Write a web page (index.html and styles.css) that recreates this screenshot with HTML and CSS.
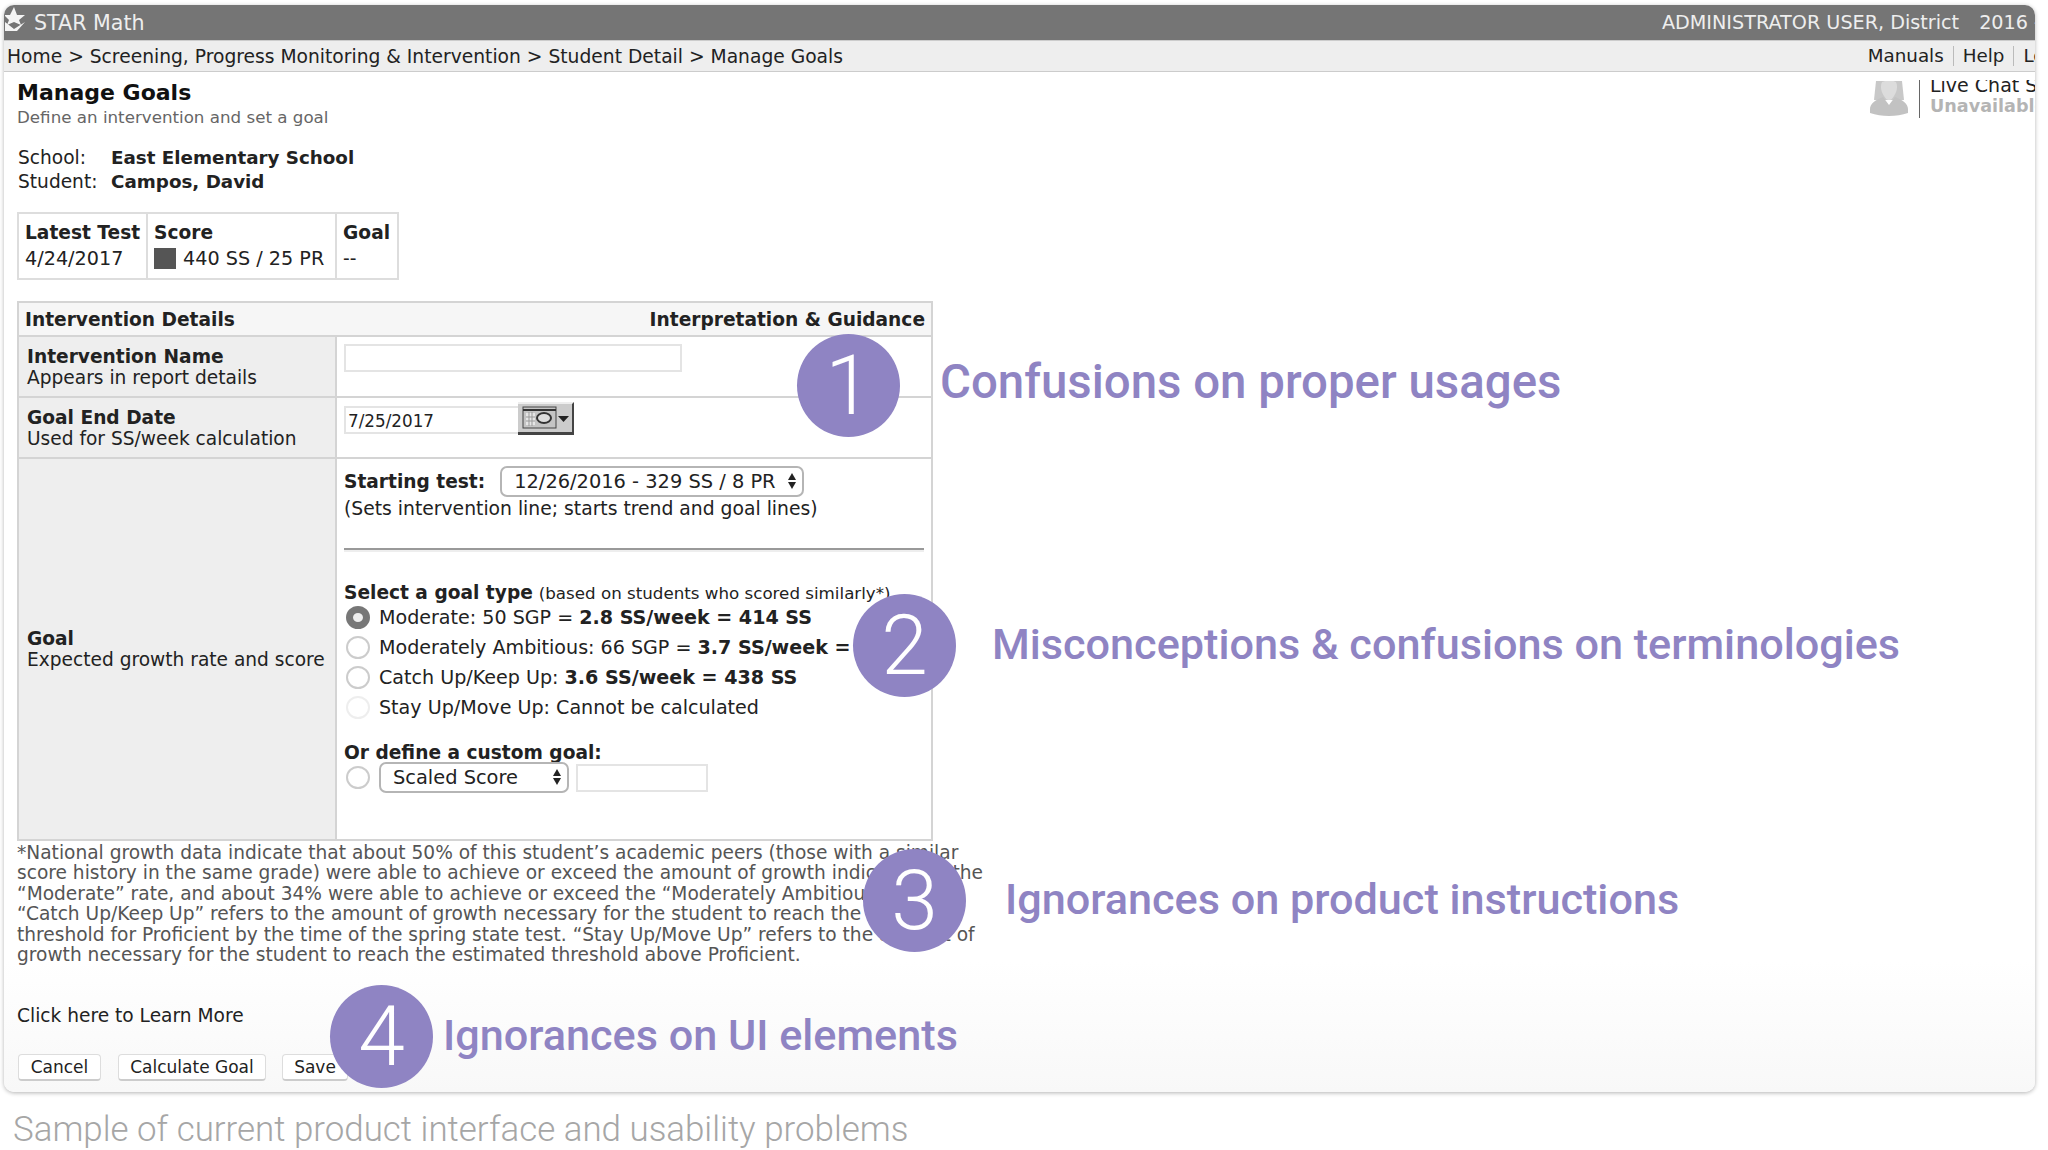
FILE: index.html
```html
<!DOCTYPE html>
<html lang="en">
<head>
    <meta charset="UTF-8">
    <title>Manage Goals</title>
    <link rel="stylesheet" href="styles.css">
</head>
<body>
<div class="page">
    <div class="window">
        <div class="titlebar">
            <svg class="logo" viewBox="0 0 22 26" width="22" height="26">
                <path d="M9 0l3 8h8l-6 5 2 5-7-3-7 3 2-5-5-5h6z" fill="#f4f4f4"/>
                <path d="M0 15l9 7 11-7-8 9H0z" fill="#f4f4f4"/>
            </svg>
            <span class="app-name">STAR Math</span>
            <span class="user">ADMINISTRATOR USER, District</span>
            <span class="year">2016 -</span>
        </div>
        <div class="crumbs">
            <span>Home &gt; Screening, Progress Monitoring &amp; Intervention &gt; Student Detail &gt; Manage Goals</span>
            <div class="toplinks">
                <a class="toplink">Manuals</a>
                <a class="toplink">Help</a>
                <a class="toplink">Logout</a>
            </div>
        </div>

        <div class="content">
            <div class="head">
                <div>
                    <h1>Manage Goals</h1>
                    <p class="sub">Define an intervention and set a goal</p>
                </div>
                <div class="chat">
                    <svg class="chat-icon" viewBox="0 0 38 35" width="38" height="35">
                        <path d="M6 0h26l2 19H4z" fill="#c8c8c8"/>
                        <path d="M12 1c5-2 10-2 14 0 2 4 1 10-2 14-2 3-3 4-5 4s-3-1-5-4c-3-4-4-10-2-14z" fill="#dcdcdc"/>
                        <path d="M0 28c0-5 5-9 13-12l6 8 6-8c8 3 13 7 13 12v4c-6 2-12 3-19 3S6 34 0 32z" fill="#c2c2c2"/>
                    </svg>
                    <div class="chat-text">
                        <div class="chat-title">Live Chat Support</div>
                        <div class="chat-status">Unavailable</div>
                    </div>
                </div>
            </div>

            <div class="who">
                <span>School:</span><b>East Elementary School</b>
                <span>Student:</span><b>Campos, David</b>
            </div>

            <table class="score">
                <tr>
                    <td class="c1"><b>Latest Test</b><br><span class="plain">4/24/2017</span></td>
                    <td class="c2"><b>Score</b><br><i class="swatch"></i><span class="plain">440 SS / 25 PR</span></td>
                    <td class="c3"><b>Goal</b><br>--</td>
                </tr>
            </table>

            <table class="details">
                <colgroup>
                    <col class="col-label">
                    <col>
                </colgroup>
                <tr class="row-top">
                    <td colspan="2" class="top">
                        <div class="top-in"><b>Intervention Details</b><b>Interpretation &amp; Guidance</b></div>
                    </td>
                </tr>
                <tr class="row-name">
                    <td class="label"><b>Intervention Name</b><br>Appears in report details</td>
                    <td class="val"><div class="inp inp-name"></div></td>
                </tr>
                <tr class="row-date">
                    <td class="label"><b>Goal End Date</b><br>Used for SS/week calculation</td>
                    <td class="val">
                        <div class="date-line">
                            <div class="inp inp-date">7/25/2017</div>
                            <div class="cal">
                                <svg viewBox="0 0 52 28" width="52" height="28">
                                    <rect x="3" y="3" width="33" height="21" fill="#c4c4c4" stroke="#444"/>
                                    <path d="M3 6h33" stroke="#333" stroke-width="2"/>
                                    <rect x="6" y="9" width="9" height="12" fill="#e6e6e6"/>
                                    <path d="M9 8v14M12 8v14M6 13h9M6 17h9" stroke="#999"/>
                                    <ellipse cx="24" cy="14" rx="7" ry="5" fill="#ddd" stroke="#333" stroke-width="2"/>
                                    <path d="M38 12h11l-5.500 6z" fill="#222"/>
                                </svg>
                            </div>
                        </div>
                    </td>
                </tr>
                <tr class="row-goal">
                    <td class="label"><b>Goal</b><br>Expected growth rate and score</td>
                    <td class="val goal-cell">
                        <div class="start-line">
                            <b>Starting test:</b>
                            <div class="sel sel-test">12/26/2016 - 329 SS / 8 PR<i class="arrows"></i></div>
                        </div>
                        <div class="note">(Sets intervention line; starts trend and goal lines)</div>
                        <div class="rule"></div>
                        <div class="type-head"><b>Select a goal type</b> <small>(based on students who scored similarly*)</small></div>
                        <div class="opt"><i class="radio on"></i><span>Moderate: 50 SGP = <b>2.8 SS/week = 414 SS</b></span></div>
                        <div class="opt"><i class="radio"></i><span>Moderately Ambitious: 66 SGP = <b>3.7 SS/week = 425 SS</b></span></div>
                        <div class="opt"><i class="radio"></i><span>Catch Up/Keep Up: <b>3.6 SS/week = 438 SS</b></span></div>
                        <div class="opt"><i class="radio off"></i><span>Stay Up/Move Up: Cannot be calculated</span></div>
                        <div class="custom-head"><b>Or define a custom goal:</b></div>
                        <div class="custom">
                            <i class="radio"></i>
                            <div class="sel sel-score">Scaled Score<i class="arrows"></i></div>
                            <div class="inp inp-custom"></div>
                        </div>
                    </td>
                </tr>
            </table>

            <p class="foot">*National growth data indicate that about 50% of this student’s academic peers (those with a similar<br>score history in the same grade) were able to achieve or exceed the amount of growth indicated by the<br>“Moderate” rate, and about 34% were able to achieve or exceed the “Moderately Ambitious” rate.<br>“Catch Up/Keep Up” refers to the amount of growth necessary for the student to reach the estimated<br>threshold for Proficient by the time of the spring state test. “Stay Up/Move Up” refers to the amount of<br>growth necessary for the student to reach the estimated threshold above Proficient.</p>

            <div class="learn">Click here to Learn More</div>

            <div class="buttons">
                <div class="btn btn-cancel">Cancel</div>
                <div class="btn btn-calc">Calculate Goal</div>
                <div class="btn btn-save">Save</div>
            </div>
        </div>
    </div>

    <p class="caption">Sample of current product interface and usability problems</p>

    <!-- numbered notes laid over the screenshot -->
    <div class="callout callout-1"><span class="num">1</span><span class="say">Confusions on proper usages</span></div>
    <div class="callout callout-2"><span class="num">2</span><span class="say">Misconceptions &amp; confusions on terminologies</span></div>
    <div class="callout callout-3"><span class="num">3</span><span class="say">Ignorances on product instructions</span></div>
    <div class="callout callout-4"><span class="num">4</span><span class="say">Ignorances on UI elements</span></div>
</div>
</body>
</html>
```

FILE: styles.css
```css
html, body {
    margin: 0;
    padding: 0;
    background: #fff;
}
.page {
    position: relative;
    width: 2048px;
    height: 1150px;
    overflow: hidden;
    font-family: "DejaVu Sans", Verdana, sans-serif;
    font-size: 18.6px;
    color: #222;
}
.window {
    margin: 5px 0 0 4px;
    width: 2031px;
    height: 1087px;
    border-radius: 10px;
    overflow: hidden;
    background: linear-gradient(#fff 88%, #f8f8f8 100%);
    box-shadow: 0 1px 4px rgba(0, 0, 0, 0.3);
}

/* top bars */
.titlebar {
    display: flex;
    align-items: center;
    height: 35px;
    background: #757575;
    color: #eee;
    white-space: nowrap;
    overflow: hidden;
}
.logo {
    flex: none;
    align-self: flex-start;
    margin: 2px 0 0 1px;
}
.app-name {
    margin-left: 7px;
    font-size: 20.6px;
}
.user {
    margin-left: auto;
    font-size: 19.2px;
}
.year {
    margin-left: 20px;
    margin-right: -6px;
    font-size: 19.2px;
}
.crumbs {
    display: flex;
    align-items: center;
    height: 30px;
    padding-left: 3px;
    background: #eee;
    border-top: 1px solid #ccc;
    border-bottom: 1px solid #ccc;
    font-size: 18.7px;
    white-space: nowrap;
    overflow: hidden;
}
.toplinks {
    display: flex;
    margin-left: auto;
    margin-right: -60px;
    font-size: 18.3px;
}
.toplink {
    padding: 0 9px;
    border-right: 1px solid #bbb;
    line-height: 20px;
}
.toplink:last-child {
    border-right: none;
}

.content {
    padding: 0 0 0 13px;
}
.head {
    display: flex;
    height: 58px;
}
h1 {
    margin: 8px 0 0;
    font-size: 22px;
    line-height: 26px;
    color: #111;
}
.sub {
    margin: 1px 0 0;
    font-size: 16.7px;
    line-height: 20px;
    color: #666;
}
.chat {
    display: flex;
    flex: none;
    margin-left: auto;
    width: 165px;
    height: 42px;
    overflow: hidden;
    white-space: nowrap;
    padding-top: 6px;
}
.chat-icon {
    flex: none;
    margin-top: 3px;
}
.chat-text {
    margin-left: 11px;
    padding-left: 10px;
    border-left: 1px solid #666;
    height: 38px;
    margin-top: 2px;
    overflow: hidden;
    line-height: 20px;
    font-size: 17.6px;
}
.chat-title {
    margin-top: -5px;
    font-size: 19px;
}
.chat-status {
    margin-top: 1px;
    font-weight: bold;
    color: #b4b4b4;
}

.who {
    display: grid;
    grid-template-columns: 93px auto;
    justify-content: start;
    margin: 16px 0 0 1px;
    line-height: 24px;
}
.who b {
    font-size: 18.3px;
}
.score {
    margin-top: 18px;
    border-collapse: collapse;
    height: 68px;
    line-height: 26px;
}
.score td {
    border: 2px solid #ddd;
    padding: 0 6px;
    vertical-align: middle;
    white-space: nowrap;
}
.plain {
    font-size: 19.2px;
}
.c1 { width: 115px; }
.c2 { width: 175px; }
.c3 { width: 48px; }
.swatch {
    display: inline-block;
    width: 22px;
    height: 21px;
    margin-right: 7px;
    background: #555;
    vertical-align: -4px;
}

.details {
    margin-top: 21px;
    width: 916px;
    border-collapse: collapse;
    table-layout: fixed;
}
.col-label {
    width: 318px;
}
.details td {
    border: 2px solid #d4d4d4;
}
.row-top { height: 34px; }
.row-name { height: 61px; }
.row-date { height: 61px; }
.row-goal { height: 382px; }
.top {
    background: #f6f6f6;
    padding: 0 6px;
}
.top-in {
    display: flex;
    justify-content: space-between;
}
.label {
    padding: 0 0 0 8px;
    background: #eee;
    line-height: 21px;
    box-sizing: border-box;
    white-space: nowrap;
}
.val {
    padding: 0 7px;
    vertical-align: top;
}
.inp {
    border: 2px solid #e4e4e4;
    box-sizing: border-box;
    background: #fff;
}
.inp-name {
    width: 338px;
    height: 28px;
    margin-top: 7px;
}
.date-line {
    display: flex;
    align-items: flex-start;
    margin-top: 4px;
}
.inp-date {
    width: 174px;
    height: 28px;
    margin-top: 4px;
    padding-left: 2px;
    line-height: 26px;
    border-right: none;
    font-size: 16.8px;
}
.cal {
    width: 56px;
    height: 33px;
    box-sizing: border-box;
    background: #ccc;
    border-top: 2px solid #eee;
    border-right: 2px solid #444;
    border-bottom: 3px solid #444;
    padding-left: 2px;
    line-height: 0;
}
.sel {
    position: relative;
    box-sizing: border-box;
    border: 2px solid #b5b5b5;
    border-radius: 7px;
    background: #fff;
    height: 31px;
    line-height: 27px;
    padding-left: 12px;
    color: #222;
    font-size: 19.4px;
    white-space: nowrap;
}
.arrows {
    position: absolute;
    right: 6px;
    top: 5px;
    width: 0;
    height: 0;
    border-left: 4px solid transparent;
    border-right: 4px solid transparent;
    border-bottom: 7px solid #222;
}
.arrows::after {
    content: "";
    position: absolute;
    left: -4px;
    top: 9px;
    border-left: 4px solid transparent;
    border-right: 4px solid transparent;
    border-top: 7px solid #222;
}
.start-line {
    display: flex;
    align-items: center;
    margin-top: 7px;
}
.sel-test {
    width: 304px;
    margin-left: 15px;
}
.note {
    margin-top: 0;
    line-height: 24px;
    font-size: 18.75px;
}
.rule {
    height: 2px;
    margin-top: 27px;
    background: #999;
    border-bottom: 2px solid #eee;
}
.type-head {
    margin-top: 32px;
    line-height: 18px;
}
small {
    font-size: 16.7px;
}
.opt {
    display: flex;
    align-items: center;
    height: 30px;
    font-size: 19.1px;
    white-space: nowrap;
}
.radio {
    flex: none;
    box-sizing: border-box;
    width: 24px;
    height: 23px;
    margin: 0 9px 0 2px;
    border: 2px solid #ccc;
    border-radius: 50%;
    background: #fff;
}
.radio.on {
    border: 7px solid #777;
    background: #eee;
}
.radio.off {
    border-color: #eee;
}
.custom-head {
    margin-top: 21px;
    line-height: 19px;
}
.custom {
    display: flex;
    align-items: center;
}
.sel-score {
    width: 190px;
    margin-right: 7px;
}
.inp-custom {
    width: 132px;
    height: 28px;
}

.foot {
    margin: 2px 0 0;
    line-height: 20.4px;
    color: #555;
    white-space: nowrap;
}
.learn {
    margin-top: 39px;
    line-height: 24px;
}
.buttons {
    display: flex;
    margin-top: 26px;
    margin-left: 1px;
}
.btn {
    box-sizing: border-box;
    height: 27px;
    line-height: 24px;
    text-align: center;
    background: #fff;
    border: 1px solid #ddd;
    border-bottom: 2px solid #ccc;
    border-radius: 4px;
    font-size: 17px;
}
.btn-cancel { width: 83px; margin-right: 17px; }
.btn-calc { width: 148px; margin-right: 16px; }
.btn-save { width: 66px; }

.caption {
    margin: 17px 0 0 13px;
    font-family: Roboto, sans-serif;
    font-weight: 300;
    font-size: 34.9px;
    line-height: 42px;
    color: #a6a6a6;
}

/* annotations */
.callout {
    position: absolute;
    display: flex;
    align-items: center;
    height: 103px;
    white-space: nowrap;
}
.num {
    flex: none;
    width: 103px;
    height: 103px;
    border-radius: 50%;
    background: #8f84c3;
    color: #fff;
    text-align: center;
    font-family: Roboto, sans-serif;
    font-weight: 300;
    font-size: 84px;
    line-height: 103px;
}
.say {
    font-family: Roboto, sans-serif;
    font-weight: 500;
    font-size: 43.2px;
    color: #8f84c3;
}
.callout-1 { left: 797px; top: 334px; }
.callout-1 .say { margin: 0 0 8px 40px; font-size: 47.4px; }
.callout-2 { left: 853px; top: 594px; }
.callout-2 .say { margin: 0 0 2px 36px; }
.callout-3 { left: 863px; top: 849px; }
.callout-3 .say { margin: 0 0 2px 39px; }
.callout-4 { left: 330px; top: 985px; }
.callout-4 .say { margin: 0 0 2px 10px; }
```
